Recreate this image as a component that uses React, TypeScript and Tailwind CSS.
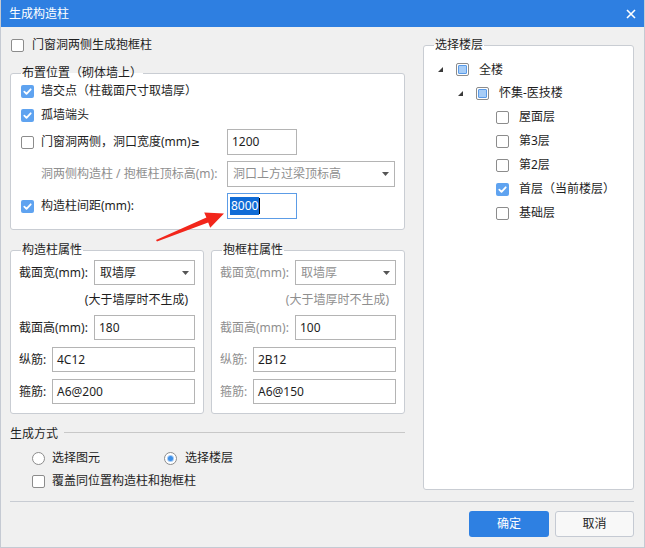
import React from 'react';

type CState = 'off' | 'on' | 'partial';

function CheckBox({ state = 'off' }: { state?: CState }) {
  if (state === 'on')
    return (
      <span className="flex h-[13px] w-[13px] shrink-0 items-center justify-center rounded-[2px] bg-[#5fa3f0]">
        <svg width="11" height="11" viewBox="0 0 11 11">
          <polyline points="2.3,5.7 4.5,7.9 8.7,3.3" fill="none" stroke="white" strokeWidth="1.8" strokeLinecap="round" strokeLinejoin="round" />
        </svg>
      </span>
    );
  if (state === 'partial')
    return (
      <span className="flex h-[13px] w-[13px] shrink-0 items-center justify-center rounded-[2px] border border-[#8c8c8c] bg-white">
        <span className="h-[9px] w-[9px] rounded-[1px] border border-[#5a9be8] bg-[#a7cdf7]" />
      </span>
    );
  return <span className="h-[13px] w-[13px] shrink-0 rounded-[2px] border border-[#8c8c8c] bg-white" />;
}

function Radio({ on = false }: { on?: boolean }) {
  return (
    <span className="flex h-[13px] w-[13px] shrink-0 items-center justify-center rounded-full border border-[#8c8c8c] bg-white">
      {on && <span className="h-[5px] w-[5px] rounded-full bg-[#3d8fe8] ring-1 ring-[#a9cdf5]" />}
    </span>
  );
}

function Caret() {
  return (
    <svg width="7" height="4" viewBox="0 0 7 4" className="shrink-0">
      <polygon points="0,0 7,0 3.5,4" fill="#555" />
    </svg>
  );
}

function Select({ value, muted = false, w }: { value: string; muted?: boolean; w: string }) {
  return (
    <div
      className={`flex h-[25px] shrink-0 items-center justify-between border border-[#b4b4b4] bg-white pl-[5px] pr-[5px] ${w} ${
        muted ? 'text-[#8f8f8f]' : 'text-[#1e1e1e]'
      }`}
    >
      <span>{value}</span>
      <Caret />
    </div>
  );
}

function Input({ value, w }: { value: string; w: string }) {
  return (
    <div className={`flex h-[25px] shrink-0 items-center border border-[#b4b4b4] bg-white pl-[4px] text-[#1e1e1e] ${w}`}>
      {value}
    </div>
  );
}

function Legend({ text, left }: { text: string; left: string }) {
  return (
    <span
      className={`absolute top-[-9px] h-[16px] bg-[linear-gradient(to_bottom,#f0f0f0_50%,#ffffff_50%)] px-[1px] leading-[16px] text-[#1e1e1e] ${left}`}
    >
      {text}
    </span>
  );
}

function TreeTri() {
  return (
    <svg width="5" height="5" viewBox="0 0 5 5" className="shrink-0">
      <polygon points="5,0 5,5 0,5" fill="#3a3a3a" />
    </svg>
  );
}

function PropGroup({ title, disabled, w, h, z, g }: { title: string; disabled: boolean; w: string; h: string; z: string; g: string }) {
  const lab = disabled ? 'text-[#8f8f8f]' : 'text-[#1e1e1e]';
  return (
    <div className="relative flex flex-col rounded-[3px] border border-[#c9cdd3] bg-white pb-[9px] pl-[8px] pr-[8px] pt-[9px]">
      <Legend text={title} left="left-[10px]" />
      <div className="flex h-[25px] items-center">
        <span className={`w-[75px] shrink-0 ${lab}`}>截面宽(mm):</span>
        <Select value={w} muted={disabled} w="flex-1" />
      </div>
      <div className={`flex h-[30px] items-center justify-end pr-[7px] ${lab}`}>(大于墙厚时不生成)</div>
      <div className="flex h-[25px] items-center">
        <span className={`w-[75px] shrink-0 ${lab}`}>截面高(mm):</span>
        <Input value={h} w="flex-1" />
      </div>
      <div className="mt-[7px] flex h-[25px] items-center">
        <span className={`w-[33px] shrink-0 ${lab}`}>纵筋:</span>
        <Input value={z} w="flex-1" />
      </div>
      <div className="mt-[7px] flex h-[25px] items-center">
        <span className={`w-[33px] shrink-0 ${lab}`}>箍筋:</span>
        <Input value={g} w="flex-1" />
      </div>
    </div>
  );
}

export default function App() {
  const floors: { name: string; state: CState }[] = [
    { name: '屋面层', state: 'off' },
    { name: '第3层', state: 'off' },
    { name: '第2层', state: 'off' },
    { name: '首层（当前楼层）', state: 'on' },
    { name: '基础层', state: 'off' },
  ];
  return (
    <div className="relative flex h-[548px] w-[645px] flex-col overflow-hidden border-x border-b border-[#c5cad3] bg-[#f0f0f0] font-['Noto_Sans','Noto_Sans_CJK_SC',sans-serif] text-[12px] leading-[16px] text-[#1e1e1e]">
      {/* title bar */}
      <div className="-mx-px flex h-[27px] shrink-0 items-center justify-between bg-[#2e7fe1] pl-[9px] pr-[9px] text-[12px] text-white">
        <span>生成构造柱</span>
        <svg width="10" height="10" viewBox="0 0 10 10">
          <path d="M1 1 L9 9 M9 1 L1 9" stroke="white" strokeWidth="1.6" />
        </svg>
      </div>

      {/* body */}
      <div className="flex pl-[9px] pt-[9px]">
        {/* left column */}
        <div className="flex w-[395px] shrink-0 flex-col">
          <div className="flex h-[18px] items-center gap-[8px] pl-[1px]">
            <CheckBox />
            <span>门窗洞两侧生成抱框柱</span>
          </div>

          <div className="relative mt-[19px] flex flex-col rounded-[3px] border border-[#c9cdd3] bg-white pb-[10px] pl-[10px] pr-[9px] pt-[5px]">
            <Legend text="布置位置（砌体墙上）" left="left-[10px]" />
            <div className="flex h-[24px] items-center gap-[7px]">
              <CheckBox state="on" />
              <span>墙交点（柱截面尺寸取墙厚）</span>
            </div>
            <div className="flex h-[24px] items-center gap-[7px]">
              <CheckBox state="on" />
              <span>孤墙端头</span>
            </div>
            <div className="mt-[2px] flex h-[26px] items-center">
              <div className="flex w-[206px] shrink-0 items-center gap-[7px]">
                <CheckBox />
                <span>
                  门窗洞两侧，洞口宽度(mm)<span className="font-['DejaVu_Sans',sans-serif] text-[11px]">≥</span>
                </span>
              </div>
              <Input value="1200" w="h-[26px] w-[70px]" />
            </div>
            <div className="mt-[6px] flex h-[26px] items-center">
              <span className="w-[206px] shrink-0 pl-[20px] text-[#8f8f8f]">洞两侧构造柱 / 抱框柱顶标高(m):</span>
              <div className="flex h-[26px] flex-1 items-center justify-between border border-[#b4b4b4] bg-white pl-[5px] pr-[5px] text-[#8f8f8f]">
                <span>洞口上方过梁顶标高</span>
                <Caret />
              </div>
            </div>
            <div className="mt-[6px] flex h-[26px] items-center">
              <div className="flex w-[206px] shrink-0 items-center gap-[7px]">
                <CheckBox state="on" />
                <span>构造柱间距(mm):</span>
              </div>
              <div className="flex h-[26px] w-[70px] shrink-0 items-center border border-[#5c9ce6] bg-white pl-[2px]">
                <span className="bg-[#0f6bd6] px-[1px] leading-[18px] text-white">8000</span>
                <span className="h-[16px] w-px bg-black" />
              </div>
            </div>
          </div>

          <div className="mt-[20px] grid grid-cols-2 gap-[7px]">
            <PropGroup title="构造柱属性" disabled={false} w="取墙厚" h="180" z="4C12" g="A6@200" />
            <PropGroup title="抱框柱属性" disabled={true} w="取墙厚" h="100" z="2B12" g="A6@150" />
          </div>

          <div className="mt-[12px] flex h-[16px] items-center">
            <span className="shrink-0">生成方式</span>
            <span className="ml-[6px] mt-[-3px] h-px flex-1 bg-[#c8c8c8]" />
          </div>
          <div className="mt-[8px] flex h-[16px] items-center pl-[22px]">
            <div className="flex w-[132px] items-center gap-[7px]">
              <Radio />
              <span>选择图元</span>
            </div>
            <div className="flex items-center gap-[8px]">
              <Radio on />
              <span>选择楼层</span>
            </div>
          </div>
          <div className="mt-[7px] flex h-[16px] items-center gap-[7px] pl-[22px]">
            <CheckBox />
            <span>覆盖同位置构造柱和抱框柱</span>
          </div>
        </div>

        {/* right column */}
        <div className="relative ml-[18px] mt-[9px] flex h-[445px] w-[211px] shrink-0 flex-col rounded-[3px] border border-[#c9cdd3] bg-white pt-[12px]">
          <Legend text="选择楼层" left="left-[10px]" />
          <div className="flex h-[23px] items-center pl-[14px]">
            <span className="flex w-[18px] shrink-0 items-center">
              <TreeTri />
            </span>
            <CheckBox state="partial" />
            <span className="ml-[10px]">全楼</span>
          </div>
          <div className="flex h-[24px] items-center pl-[34px]">
            <span className="flex w-[18px] shrink-0 items-center">
              <TreeTri />
            </span>
            <CheckBox state="partial" />
            <span className="ml-[10px]">怀集-医技楼</span>
          </div>
          {floors.map((f) => (
            <div key={f.name} className="flex h-[24px] items-center pl-[72px]">
              <CheckBox state={f.state} />
              <span className="ml-[10px]">{f.name}</span>
            </div>
          ))}
        </div>
      </div>

      {/* separator */}
      <div className="ml-[9px] mr-[10px] mt-[11px] h-px bg-[#c8ccd3]" />

      {/* buttons */}
      <div className="mt-[9px] flex justify-end gap-[6px] pr-[10px]">
        <button className="flex h-[26px] w-[80px] items-center justify-center rounded-[3px] bg-[#2e80e2] text-white">确定</button>
        <button className="flex h-[26px] w-[79px] items-center justify-center rounded-[3px] border border-[#c5cad3] bg-[#f8f8f8] text-[#1e1e1e]">取消</button>
      </div>

      {/* red annotation arrow */}
      <svg className="pointer-events-none absolute left-0 top-0" width="645" height="548" viewBox="0 0 645 548">
        <polygon
          points="155,240 205.4,217.6 203.2,212.4 223,213.5 209.2,227.8 207.2,222.6 156,241.5"
          fill="#f2261b"
        />
      </svg>
    </div>
  );
}
